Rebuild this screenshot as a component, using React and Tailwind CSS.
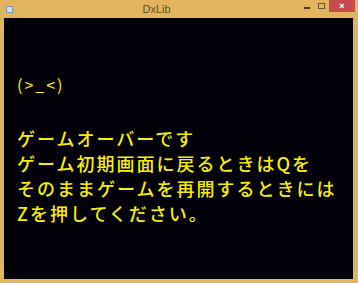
export default function App() {
  const lines = [
    'ゲームオーバーです',
    'ゲーム初期画面に戻るときはQを',
    'そのままゲームを再開するときには',
    'Zを押してください。',
  ];

  return (
    <div className="w-[358px] h-[283px] bg-[#e2b45e] flex flex-col overflow-hidden">
      {/* title bar */}
      <div className="h-[18px] flex items-center relative">
        <div className="ml-[6px] w-[7px] h-[7px] bg-[#cfe3ef] border border-[#7d9bb0]" />
        <div className="flex-1 text-center text-[11px] text-[#5e4b2c] font-['Liberation_Sans',sans-serif] leading-none">DxLib</div>
        <div className="flex items-start h-full">
          <div className="w-[14px] h-[12px] flex items-center justify-center">
            <div className="w-[6px] h-[2px] bg-[#4a3a20] mt-[3px]" />
          </div>
          <div className="w-[14px] h-[12px] flex items-center justify-center">
            <div className="w-[7px] h-[6px] border border-[#6a5530]" />
          </div>
          <div className="ml-[1px] mr-[3px] w-[26px] h-[12px] bg-[#c74a4f] flex items-center justify-center text-white text-[9px] font-bold leading-none font-['Liberation_Sans',sans-serif]">
            ×
          </div>
        </div>
      </div>
      {/* client area */}
      <div className="ml-[4px] mr-[5px] h-[261px] bg-[#02010a] pt-[56px] pl-[13px] text-[#f5f000] font-['Noto_Sans_CJK_JP',sans-serif]">
        <div className="text-[16px] leading-[20px] tracking-[2px] font-normal">(&gt;_&lt;)</div>
        <div className="mt-[32px] text-[18px] leading-[25px] tracking-[2px] font-medium">
          {lines.map((l, i) => (
            <div key={i} className="whitespace-nowrap">{l}</div>
          ))}
        </div>
      </div>
    </div>
  );
}
